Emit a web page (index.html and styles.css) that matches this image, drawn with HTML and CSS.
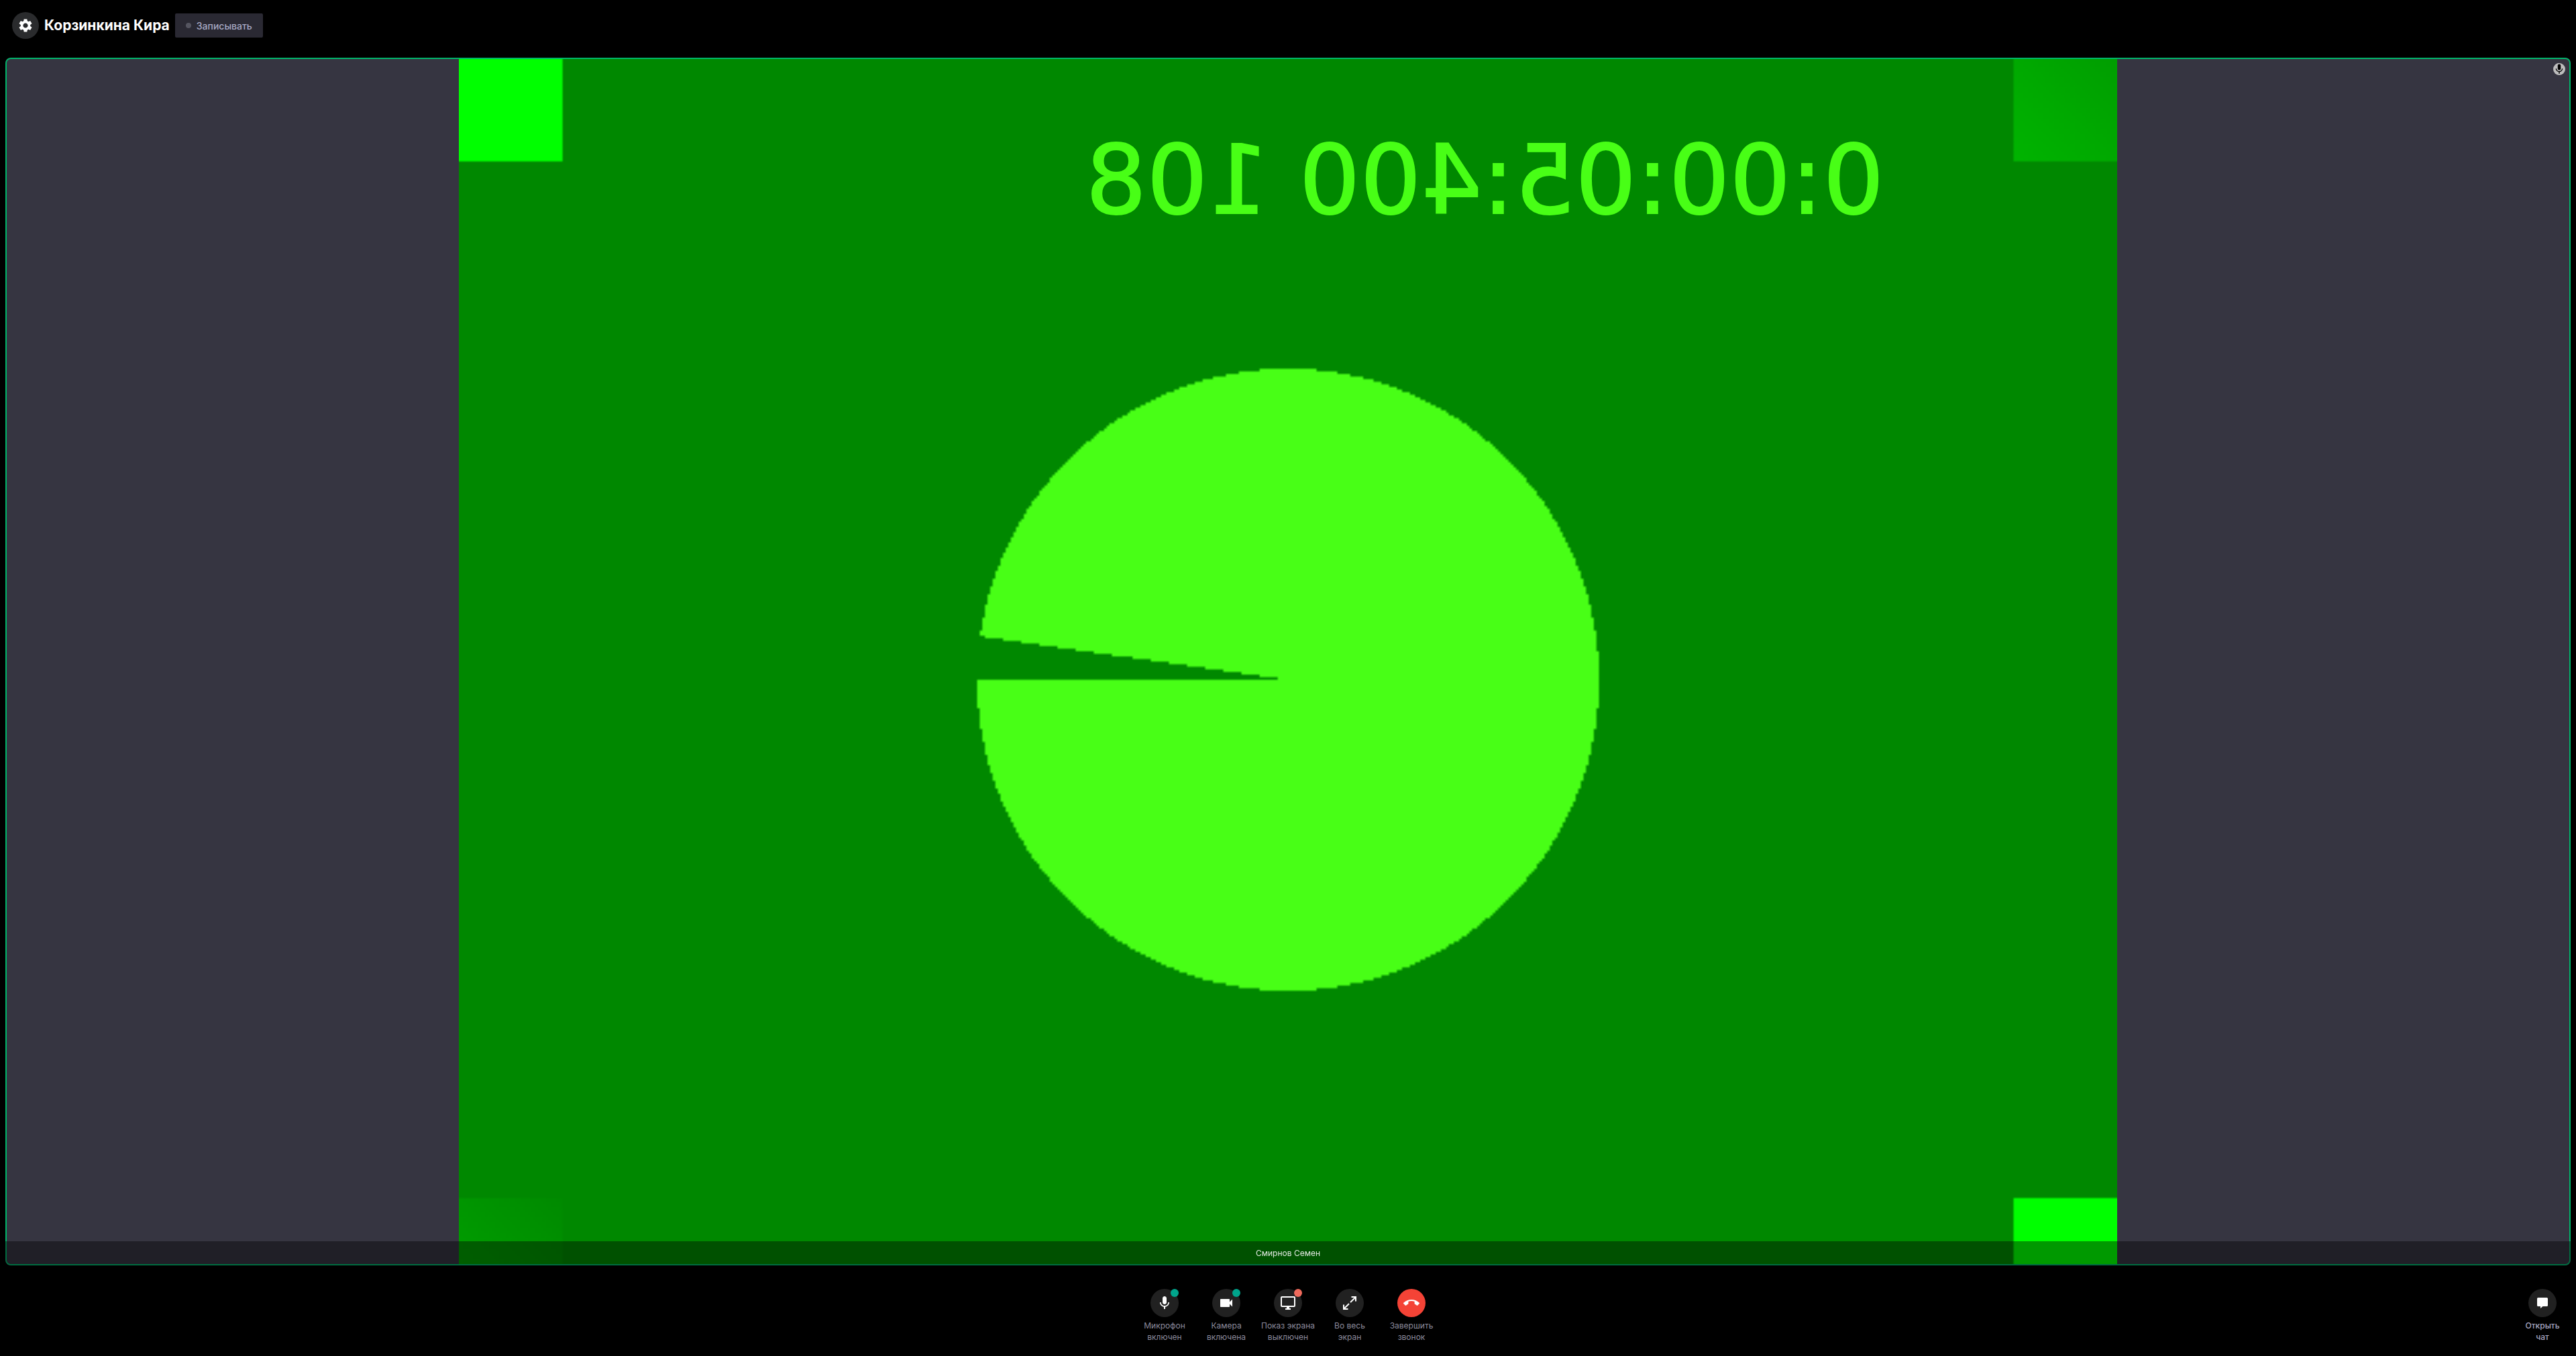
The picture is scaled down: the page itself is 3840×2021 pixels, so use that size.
FILE: index.html
```html
<!DOCTYPE html>
<html lang="ru">
<head>
<meta charset="utf-8">
<meta name="viewport" content="width=device-width, initial-scale=1">
<title>Корзинкина Кира</title>
<link rel="stylesheet" href="styles.css">
</head>
<body>
<svg class="sprite" aria-hidden="true">
  <symbol id="mic" viewBox="0 0 24 24"><path d="M12 14c1.66 0 2.99-1.34 2.99-3L15 5c0-1.66-1.34-3-3-3S9 3.34 9 5v6c0 1.66 1.34 3 3 3zm5.3-3c0 3-2.54 5.1-5.3 5.1S6.7 14 6.7 11H5c0 3.41 2.72 6.23 6 6.72V21h2v-3.28c3.28-.48 6-3.3 6-6.72h-1.7z"/></symbol>
</svg>

<header class="topbar">
  <button class="round settings" type="button" aria-label="Настройки">
    <svg class="icon" viewBox="0 0 24 24"><path d="M19.14 12.94c.04-.3.06-.61.06-.94 0-.32-.02-.64-.07-.94l2.03-1.58c.18-.14.23-.41.12-.61l-1.92-3.32c-.12-.22-.37-.29-.59-.22l-2.39.96c-.5-.38-1.03-.7-1.62-.94l-.36-2.54c-.04-.24-.24-.41-.48-.41h-3.84c-.24 0-.43.17-.47.41l-.36 2.54c-.59.24-1.13.57-1.62.94l-2.39-.96c-.22-.08-.47 0-.59.22L2.74 8.87c-.12.21-.08.47.12.61l2.03 1.58c-.05.3-.09.63-.09.94s.02.64.07.94l-2.03 1.58c-.18.14-.23.41-.12.61l1.92 3.32c.12.22.37.29.59.22l2.39-.96c.5.38 1.03.7 1.62.94l.36 2.54c.05.24.24.41.48.41h3.84c.24 0 .44-.17.47-.41l.36-2.54c.59-.24 1.13-.56 1.62-.94l2.39.96c.22.08.47 0 .59-.22l1.92-3.32c.12-.22.07-.47-.12-.61l-2.01-1.58zM12 15.6c-1.98 0-3.6-1.62-3.6-3.6s1.62-3.6 3.6-3.6 3.6 1.62 3.6 3.6-1.62 3.6-3.6 3.6z"/></svg>
  </button>
  <h1 class="title">Корзинкина Кира</h1>
  <button class="record" type="button"><span class="record-dot"></span>Записывать</button>
</header>

<main class="stage">
  <section class="tile">
    <div class="video">
      <canvas class="frame" id="frame" width="640" height="480"></canvas>
      <svg class="timecode" viewBox="0 0 640 480"><text transform="scale(-1,1)" x="-550" y="60" stroke-width=".5">0:00:05:400 108</text></svg>
    </div>
    <span class="mic-state"><svg class="icon icon-small"><use href="#mic"/></svg></span>
    <p class="caption">Смирнов Семен</p>
  </section>
</main>

<footer class="controls">
  <div class="call-actions">
    <button class="action" type="button">
      <span class="round"><svg class="icon"><use href="#mic"/></svg><i class="badge on"></i></span>
      <span class="label">Микрофон включен</span>
    </button>
    <button class="action" type="button">
      <span class="round"><svg class="icon" viewBox="0 0 24 24"><path d="M17 10.5V7c0-.55-.45-1-1-1H4c-.55 0-1 .45-1 1v10c0 .55.45 1 1 1h12c.55 0 1-.45 1-1v-3.500l4 4v-11l-4 4z"/></svg><i class="badge on"></i></span>
      <span class="label">Камера включена</span>
    </button>
    <button class="action" type="button">
      <span class="round"><svg class="icon" viewBox="0 0 24 24"><path d="M21 2H3c-1.1 0-2 .9-2 2v12c0 1.1.9 2 2 2h7v2H8v2h8v-2h-2v-2h7c1.1 0 2-.9 2-2V4c0-1.1-.9-2-2-2zm0 14H3V4h18v12z"/></svg><i class="badge off"></i></span>
      <span class="label">Показ экрана выключен</span>
    </button>
    <button class="action" type="button">
      <span class="round"><svg class="icon stroked" viewBox="0 0 24 24"><path d="M14.500 3H21v6.500M21 3l-8 8M3 14.500V21h6.500M3 21l8-8"/></svg></span>
      <span class="label">Во весь<br>экран</span>
    </button>
    <button class="action" type="button">
      <span class="round hangup"><svg class="icon" viewBox="0 0 24 24"><path d="M12 9c-1.600 0-3.150.25-4.600.72v3.100c0 .39-.23.74-.56.900-.98.49-1.870 1.120-2.660 1.850-.18.180-.43.280-.7.280-.28 0-.53-.11-.71-.29L.29 13.080c-.18-.17-.29-.42-.29-.700 0-.28.110-.53.290-.71C3.340 8.780 7.460 7 12 7s8.660 1.780 11.710 4.670c.18.180.29.430.29.710 0 .28-.11.530-.29.710l-2.480 2.480c-.18.180-.43.290-.71.290-.27 0-.52-.11-.7-.28-.79-.74-1.690-1.360-2.670-1.850-.33-.16-.56-.5-.56-.900v-3.100C15.150 9.250 13.600 9 12 9z"/></svg></span>
      <span class="label">Завершить звонок</span>
    </button>
  </div>
  <button class="action chat" type="button">
    <span class="round"><svg class="icon" viewBox="0 0 24 24"><path d="M5.500 4h13A1.500 1.500 0 0 1 20 5.500v10a1.500 1.500 0 0 1-1.500 1.500H12.500L9 20v-3H5.500A1.500 1.500 0 0 1 4 15.500v-10A1.500 1.500 0 0 1 5.500 4z"/></svg></span>
    <span class="label">Открыть<br>чат</span>
  </button>
</footer>
<script src="video.js"></script>
</body>
</html>
```
FILE: styles.css
```css
* { box-sizing: border-box; }

body {
  margin: 0;
  min-height: 100vh;
  display: flex;
  flex-direction: column;
  background: #000;
  color: #fff;
  font-family: Inter, "Liberation Sans", sans-serif;
}

button {
  margin: 0;
  padding: 0;
  border: 0;
  background: none;
  color: inherit;
  font: inherit;
  cursor: pointer;
}

.sprite { position: absolute; width: 0; height: 0; }

.icon { display: block; width: 24px; height: 24px; fill: currentColor; }
.icon-small { width: 18px; height: 18px; }
.stroked { fill: none; stroke: currentColor; stroke-width: 2; }

.round {
  position: relative;
  display: flex;
  align-items: center;
  justify-content: center;
  width: 42px;
  height: 42px;
  border-radius: 50%;
  background: #212121;
}

/* Top bar */
.topbar {
  display: flex;
  align-items: center;
  gap: 8px;
  padding: 18px 18px 28px;
}
.settings { width: 40px; height: 40px; background: #2a2b2d; }
.title {
  margin: 0;
  font-size: 21px;
  line-height: 28px;
  font-weight: 700;
}
.record {
  display: flex;
  align-items: center;
  gap: 8px;
  height: 36px;
  padding: 0 16px;
  border-radius: 2px;
  background: #2a2933;
  color: #a8a9c4;
  font-size: 14px;
  font-weight: 500;
}
.record-dot { width: 8px; height: 8px; border-radius: 50%; background: #555560; }

/* Video tile */
.stage { flex: 1; display: flex; padding: 0 8px; }
.tile {
  position: relative;
  flex: 1;
  overflow: hidden;
  border-radius: 8px;
  background: #363541;
}
.tile::after {
  content: "";
  position: absolute;
  inset: 0;
  border: 2px solid #00b56b;
  border-radius: 8px;
}
.video {
  position: absolute;
  top: 0;
  left: 50%;
  height: 103%;
  aspect-ratio: 4 / 3;
  transform: translateX(-50%);
}
.frame, .timecode { position: absolute; inset: 0; width: 100%; height: 100%; }
.timecode {
  fill: #48ff16;
  stroke: #48ff16;
  font-family: "DejaVu Sans", sans-serif;
  font-size: 37px;
}
.mic-state {
  position: absolute;
  top: 8px;
  right: 8px;
  border-radius: 50%;
  background: #bdbdbd;
  color: #000;
}
.caption {
  position: absolute;
  z-index: 1;
  left: 0;
  right: 0;
  bottom: 0;
  margin: 0;
  background: rgba(0, 0, 0, .4);
  color: #e3e9e3;
  font-size: 12px;
  line-height: 36px;
  text-align: center;
}

/* Call controls */
.controls {
  display: grid;
  grid-template-columns: 1fr auto 1fr;
  padding: 35px 20px 20px;
}
.call-actions { grid-column: 2; display: flex; }
.action {
  display: flex;
  flex-direction: column;
  align-items: center;
  gap: 4px;
  width: 92px;
  color: #fff;
}
.label {
  padding: 0 4px;
  color: #8c8b9d;
  font-size: 12px;
  line-height: 17px;
}
.hangup { background: #f44336; }
.badge {
  position: absolute;
  top: 0;
  right: 0;
  width: 12px;
  height: 12px;
  border-radius: 50%;
}
.on { background: #00a58c; }
.off { background: #ef6a5c; }
.chat { justify-self: end; width: 60px; }
.chat .label { color: #a8a9c4; font-weight: 500; }
```
FILE: video.js
```js
// Test pattern shown in the participant's video: corner blocks and a sweeping disc.
const ctx = document.getElementById('frame').getContext('2d');

ctx.fillStyle = '#008800';
ctx.fillRect(0, 0, 640, 480);

function block(x, y, from, to) {
  const fill = ctx.createLinearGradient(x, y + 40, x + 40, y);
  fill.addColorStop(0, from);
  fill.addColorStop(1, to);
  ctx.fillStyle = fill;
  ctx.fillRect(x, y, 40, 40);
}
block(0, 0, '#00ff00', '#00ff00');
block(600, 440, '#00ff00', '#00ff00');
block(600, 0, '#00b400', '#009e00');
block(0, 440, '#00a200', '#008a00');

// The disc is filled pixel by pixel so that its edge stays stepped.
const radius = 120;
ctx.fillStyle = '#48ff16';
for (let y = 240 - radius; y < 240 + radius; y++) {
  const dy = y + 0.5 - 240;
  const half = Math.round(Math.sqrt(radius * radius - dy * dy));
  const up = 240 - y;
  const start = up > 0 && up < 18 ? Math.ceil(323 - 7.1 * up) : 320 - half;
  ctx.fillRect(start, y, 320 + half - start, 1);
}
```
